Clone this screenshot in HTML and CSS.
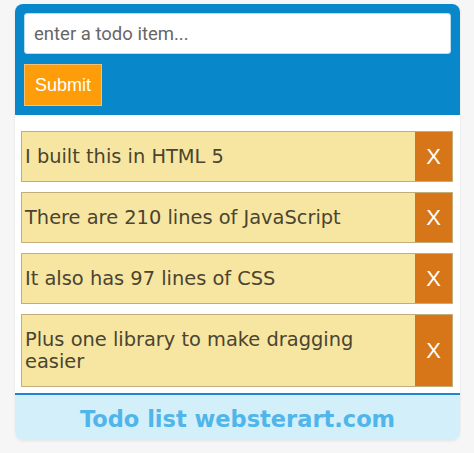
FILE: index.html
```html
<!DOCTYPE html>
<html>
<head>
<meta charset="utf-8">
<link rel="stylesheet" href="styles.css">
</head>
<body>
<div class="app">
  <form class="entry">
    <input class="entry-input" type="text" placeholder="enter a todo item...">
    <button class="entry-submit" type="button">Submit</button>
  </form>
  <ul class="todos">
    <li class="todo"><span class="todo-text">I built this in HTML 5</span><button class="todo-del" type="button">X</button></li>
    <li class="todo"><span class="todo-text">There are 210 lines of JavaScript</span><button class="todo-del" type="button">X</button></li>
    <li class="todo"><span class="todo-text">It also has 97 lines of CSS</span><button class="todo-del" type="button">X</button></li>
    <li class="todo"><span class="todo-text">Plus one library to make dragging easier</span><button class="todo-del" type="button">X</button></li>
  </ul>
  <footer class="foot">Todo list websterart.com</footer>
</div>
</body>
</html>
```

FILE: styles.css
```css
html, body {
  margin: 0;
  background: #f6f6f6;
}
body {
  padding: 4px 14px 12px 15px;
}
.app {
  width: 445px;
  background: #ffffff;
  border-radius: 8px;
  box-shadow: 0 1px 3px rgba(0,0,0,0.08);
  overflow: hidden;
}
.entry {
  margin: 0;
  background: #0987cb;
  padding: 9px;
  display: flex;
  flex-direction: column;
  align-items: flex-start;
  gap: 10px;
}
.entry-input {
  box-sizing: border-box;
  width: 427px;
  height: 41px;
  border: 1px solid #b8dcf0;
  border-radius: 3px;
  padding: 0 9px;
  font-family: Roboto, "Liberation Sans", sans-serif;
  font-size: 18.5px;
  color: #333;
  background: #fff;
  outline: none;
}
.entry-input::placeholder {
  color: #666666;
}
.entry-submit {
  box-sizing: border-box;
  width: 78px;
  height: 42px;
  background: #fd9d0a;
  border: 1px solid #f6c070;
  color: #ffffff;
  font-family: "Liberation Sans", Arial, sans-serif;
  font-size: 18px;
  padding: 0;
  margin: 0;
}
.todos {
  list-style: none;
  margin: 0;
  padding: 16px 7px 6px 6px;
  display: flex;
  flex-direction: column;
  gap: 10px;
}
.todo {
  display: flex;
  border: 1px solid #c4ad78;
  background: #f7e6a2;
}
.todo-text {
  flex: 1;
  padding: 14px 20px 13px 3px;
  font-family: "DejaVu Sans", Verdana, sans-serif;
  font-size: 19.4px;
  line-height: 22px;
  color: #4a4430;
}
.todo-del {
  width: 37px;
  flex: none;
  border: none;
  margin: 0;
  padding: 0;
  background: #d67619;
  color: #fff;
  font-family: "Liberation Sans", Arial, sans-serif;
  font-size: 22px;
}
.foot {
  box-sizing: border-box;
  height: 47px;
  border-top: 2px solid #1e86d2;
  background: #d3eff9;
  display: flex;
  align-items: center;
  justify-content: center;
  padding-top: 3px;
  font-family: "DejaVu Sans", Verdana, sans-serif;
  font-weight: bold;
  font-size: 22.5px;
  color: #4fb5ea;
}
```
